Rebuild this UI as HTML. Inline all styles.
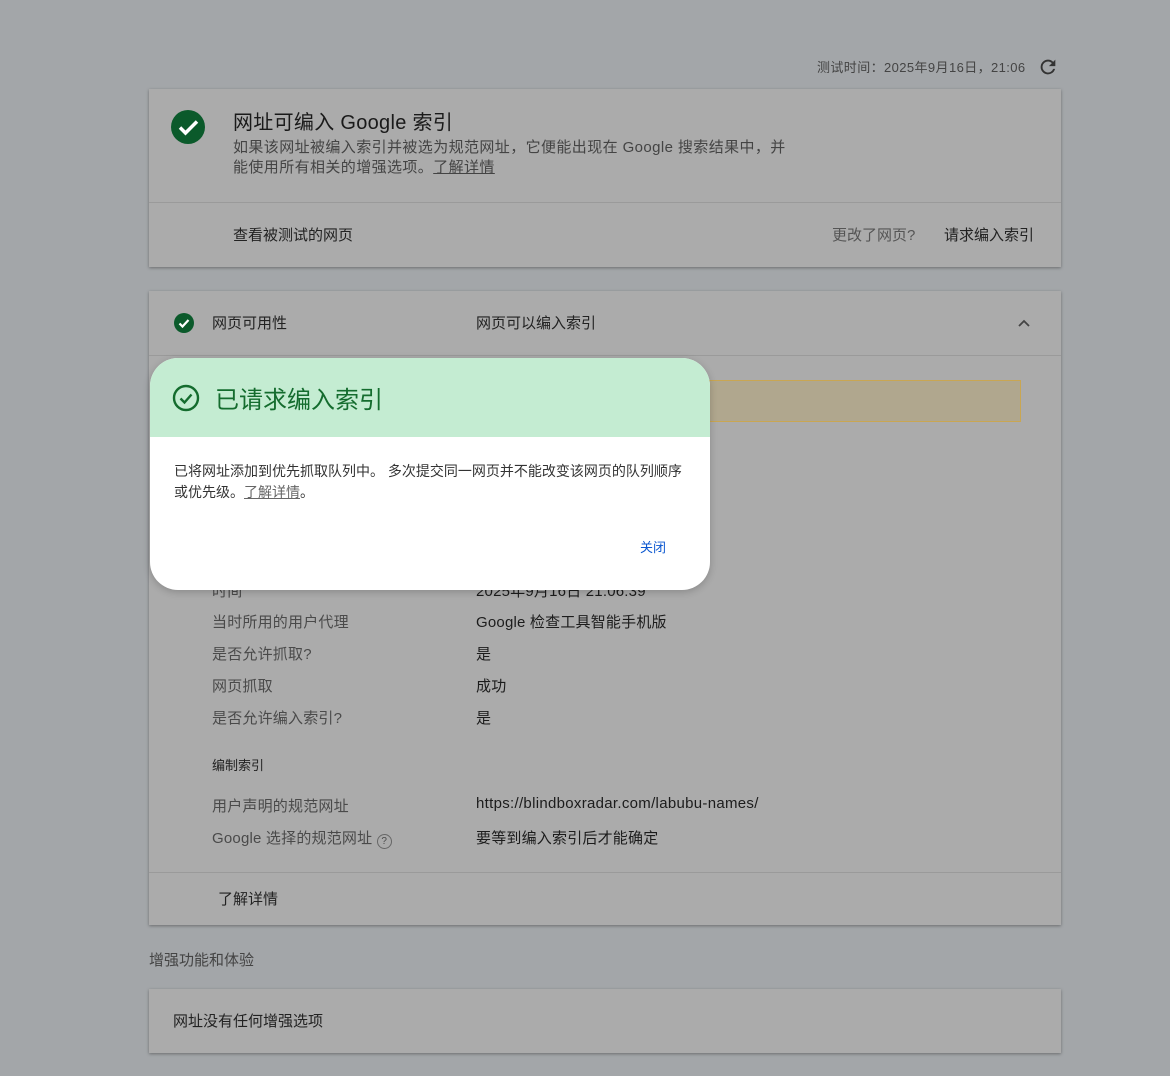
<!DOCTYPE html>
<html><head><meta charset="utf-8"><style>
*{margin:0;padding:0;box-sizing:border-box}
body{width:1170px;height:1076px;background:#a3a6a9;font-family:"Liberation Sans","Noto Sans CJK SC",sans-serif;position:relative;overflow:hidden;color:#1f1f1f}
.a{position:absolute;white-space:nowrap}
.card{position:absolute;left:149px;width:912px;background:#ababab;box-shadow:0 1px 3px rgba(0,0,0,.35)}
.hr{position:absolute;left:0;right:0;height:1px;background:#9a9a9a}
.lbl{color:#4a4a4a;font-size:15px;letter-spacing:.2px}
.val{color:#1c1c1c;font-size:15px;letter-spacing:.2px}
</style></head><body>
<div class="a" style="left:817px;top:57px;font-size:13px;color:#444;letter-spacing:.4px">测试时间：2025年9月16日，21:06</div>
<svg class="a" style="left:1037px;top:56px" width="22" height="22" viewBox="0 0 24 24"><path d="M17.65 6.35A7.95 7.95 0 0 0 12 4a8 8 0 1 0 7.73 10h-2.08A6 6 0 1 1 12 6c1.66 0 3.14.69 4.22 1.78L13 11h7V4z" fill="#333"/></svg>

<div class="card" style="top:89px;height:178px">
  <svg class="a" style="left:21px;top:20px" width="36" height="36" viewBox="0 0 36 36"><circle cx="18" cy="18" r="17" fill="#0b5a2b"/><path d="M10 18.5l5.5 5.5L27 12.5" stroke="#fff" stroke-width="3.5" fill="none"/></svg>
  <div class="a" style="left:84px;top:17px;font-size:20px;color:#1a1a1a;letter-spacing:.3px">网址可编入 Google 索引</div>
  <div class="a" style="left:84px;top:49px;font-size:15px;color:#444;line-height:20px;letter-spacing:.4px">如果该网址被编入索引并被选为规范网址，它便能出现在 Google 搜索结果中，并<br>能使用所有相关的增强选项。<u>了解详情</u></div>
  <div class="hr" style="top:113px"></div>
  <div class="a" style="left:84px;top:135px;font-size:15px;color:#222">查看被测试的网页</div>
  <div class="a" style="left:683px;top:135px;font-size:15px;color:#555">更改了网页?</div>
  <div class="a" style="left:795px;top:135px;font-size:15px;color:#222">请求编入索引</div>
</div>

<div class="card" style="top:291px;height:634px">
  <svg class="a" style="left:25px;top:22px" width="20" height="20" viewBox="0 0 20 20"><circle cx="10" cy="10" r="10" fill="#0b5a2b"/><path d="M5.5 10.5l3 3 6-6.5" stroke="#fff" stroke-width="2.2" fill="none"/></svg>
  <div class="a" style="left:63px;top:21px;font-size:15px;color:#222">网页可用性</div>
  <div class="a" style="left:327px;top:21px;font-size:15px;color:#222">网页可以编入索引</div>
  <svg class="a" style="left:868px;top:27px" width="14" height="10" viewBox="0 0 14 10"><path d="M2 8l5-5 5 5" stroke="#444" stroke-width="1.8" fill="none"/></svg>
  <div class="hr" style="top:64px"></div>
  <div class="a" style="left:540px;top:89px;width:332px;height:42px;background:#b0a78e;border:1px solid #c9a652"></div>
  <div class="a lbl" style="left:63px;top:289px">时间</div>
  <div class="a val" style="left:327px;top:289px">2025年9月16日 21:06:39</div>
  <div class="a lbl" style="left:63px;top:320px">当时所用的用户代理</div>
  <div class="a val" style="left:327px;top:320px">Google 检查工具智能手机版</div>
  <div class="a lbl" style="left:63px;top:352px">是否允许抓取?</div>
  <div class="a val" style="left:327px;top:352px">是</div>
  <div class="a lbl" style="left:63px;top:384px">网页抓取</div>
  <div class="a val" style="left:327px;top:384px">成功</div>
  <div class="a lbl" style="left:63px;top:416px">是否允许编入索引?</div>
  <div class="a val" style="left:327px;top:416px">是</div>
  <div class="a" style="left:63px;top:464px;font-size:13px;color:#222">编制索引</div>
  <div class="a lbl" style="left:63px;top:504px">用户声明的规范网址</div>
  <div class="a val" style="left:327px;top:504px;letter-spacing:.3px">https://blindboxradar.com/labubu-names/</div>
  <div class="a lbl" style="left:63px;top:536px">Google 选择的规范网址 <span style="display:inline-block;width:15px;height:15px;border:1px solid #666;border-radius:50%;font-size:10px;text-align:center;line-height:13px;vertical-align:-1px">?</span></div>
  <div class="a val" style="left:327px;top:536px">要等到编入索引后才能确定</div>
  <div class="hr" style="top:581px"></div>
  <div class="a" style="left:69px;top:597px;font-size:15px;color:#222">了解详情</div>
</div>

<div class="a" style="left:149px;top:949px;font-size:15px;color:#444">增强功能和体验</div>
<div class="card" style="top:989px;height:64px">
  <div class="a" style="left:24px;top:21px;font-size:15px;color:#222">网址没有任何增强选项</div>
</div>

<div class="a" style="left:150px;top:358px;width:560px;height:232px;background:#fff;border-radius:28px;overflow:hidden;box-shadow:0 2px 8px rgba(0,0,0,.2)">
  <div style="height:79px;background:#c4ecd2;position:relative">
    <svg class="a" style="left:22px;top:26px" width="28" height="28" viewBox="0 0 28 28"><circle cx="14" cy="14" r="12" stroke="#146c2e" stroke-width="2.4" fill="none"/><path d="M8.5 14.5l4 4 7-8" stroke="#146c2e" stroke-width="2.4" fill="none"/></svg>
    <div class="a" style="left:65px;top:22px;font-size:24px;color:#146c2e">已请求编入索引</div>
  </div>
  <div class="a" style="left:24px;top:103px;font-size:14px;color:#333;line-height:21px">已将网址添加到优先抓取队列中。 多次提交同一网页并不能改变该网页的队列顺序<br>或优先级。<u style="color:#666">了解详情</u>。</div>
  <div class="a" style="left:490px;top:179px;font-size:13px;color:#0b57d0">关闭</div>
</div>
</body></html>
